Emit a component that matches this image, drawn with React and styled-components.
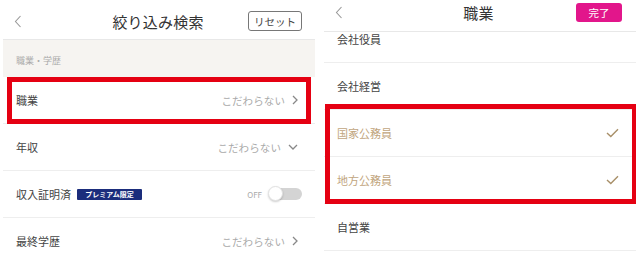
import React from 'react';
import styled, { createGlobalStyle } from 'styled-components';

const GlobalStyle = createGlobalStyle`
  html, body {
    margin: 0;
    padding: 0;
    background: #fff;
  }
  body {
    font-family: "Noto Sans CJK JP", "Noto Sans", sans-serif;
    color: #444;
  }
`;

const Page = styled.div`
  display: flex;
  gap: 9px;
  padding-left: 3px;
  width: 640px;
  height: 264px;
  overflow: hidden;
  box-sizing: border-box;
`;

const Panel = styled.div`
  position: relative;
  flex: none;
  width: 312px;
  height: 264px;
  overflow: hidden;
  background: #fff;
  display: flex;
  flex-direction: column;
`;

const Header = styled.div`
  flex: none;
  box-sizing: border-box;
  height: ${p => p.$height}px;
  padding: ${p => p.$pad};
  border-bottom: 1px solid #e8e8e8;
  display: grid;
  grid-template-columns: 1fr auto 1fr;
  align-items: center;
`;

const Back = styled.div`
  justify-self: start;
  display: flex;
  align-items: center;
`;

const Title = styled.div`
  font-size: 15px;
  color: #333;
  letter-spacing: 0.2px;
`;

const HeaderButton = styled.div`
  justify-self: end;
  box-sizing: border-box;
  display: flex;
  align-items: center;
  justify-content: center;
  width: ${p => p.$w}px;
  height: ${p => p.$h}px;
  border-radius: 3px;
  font-size: 10.5px;
  ${p => p.$primary
    ? 'background: #e2168b; color: #fff;'
    : 'border: 1.5px solid #777; color: #444; background: #fff;'}
`;

const SectionLabel = styled.div`
  flex: none;
  height: 37px;
  box-sizing: border-box;
  padding: 3px 0 0 13px;
  background: #f6f4f1;
  display: flex;
  align-items: center;
  font-size: 9px;
  color: #aaa;
`;

const List = styled.div`
  display: flex;
  flex-direction: column;
  margin-top: ${p => p.$offset || 0}px;
`;

const Row = styled.div`
  flex: none;
  box-sizing: border-box;
  height: 47px;
  padding: 0 17px 0 13px;
  border-bottom: 1px solid #eeeeee;
  display: flex;
  align-items: center;
  justify-content: space-between;
  font-size: 11px;
  color: ${p => p.$selected ? '#c1a57d' : '#444'};
`;

const Label = styled.div`
  display: flex;
  align-items: center;
  gap: 6px;
`;

const Value = styled.div`
  display: flex;
  align-items: center;
  gap: 7px;
  color: #aaa;
  font-size: 10.5px;
  letter-spacing: 0.1px;
`;

const Badge = styled.span`
  display: inline-flex;
  align-items: center;
  justify-content: center;
  width: 65px;
  height: 11px;
  background: #1b2d7c;
  color: #fff;
  font-size: 7px;
  font-weight: 700;
  border-radius: 1px;
`;

const ToggleWrap = styled.div`
  display: flex;
  align-items: center;
  gap: 7px;
  font-size: 8px;
  color: #aaa;
  margin-right: -4px;
`;

const Track = styled.div`
  position: relative;
  width: 31px;
  height: 12px;
  margin-left: 2px;
  border-radius: 6px;
  background: #d4d4d4;
`;

const Knob = styled.div`
  position: absolute;
  left: -3px;
  top: -2px;
  width: 15px;
  height: 15px;
  box-sizing: border-box;
  border-radius: 50%;
  background: #fff;
  border: 1px solid #e2e2e2;
  box-shadow: 0 1px 2px rgba(0, 0, 0, 0.2);
`;

const Highlight = styled.div`
  position: absolute;
  box-sizing: border-box;
  left: ${p => p.$left}px;
  top: ${p => p.$top}px;
  width: ${p => p.$w}px;
  height: ${p => p.$h}px;
  border: 5px solid #e50012;
  pointer-events: none;
`;

const ChevronLeft = () => (
  <svg width="8" height="13" viewBox="0 0 8 13">
    <path d="M6.5 1 L1.5 6.5 L6.5 12" fill="none" stroke="#999" strokeWidth="1.1" />
  </svg>
);

const ChevronRight = () => (
  <svg width="6" height="10" viewBox="0 0 6 10">
    <path d="M1 1 L5 5 L1 9" fill="none" stroke="#888" strokeWidth="1.3" />
  </svg>
);

const ChevronDown = () => (
  <svg width="10" height="6" viewBox="0 0 10 6">
    <path d="M1 1 L5 5 L9 1" fill="none" stroke="#888" strokeWidth="1.3" />
  </svg>
);

const Check = () => (
  <svg width="13" height="10" viewBox="0 0 13 10">
    <path d="M1 5 L4.8 8.5 L12 1.2" fill="none" stroke="#a88f68" strokeWidth="1.4" />
  </svg>
);

const jobs = [
  { name: '会社役員' },
  { name: '会社経営' },
  { name: '国家公務員', selected: true },
  { name: '地方公務員', selected: true },
  { name: '自営業' },
];

export default function App() {
  return (
    <>
      <GlobalStyle />
      <Page>
        <Panel>
          <Header $height={40} $pad="3px 13px 0 11px">
            <Back><ChevronLeft /></Back>
            <Title>絞り込み検索</Title>
            <HeaderButton $w={54} $h={20}>リセット</HeaderButton>
          </Header>
          <SectionLabel>職業・学歴</SectionLabel>
          <List>
            <Row>
              <Label>職業</Label>
              <Value>こだわらない<ChevronRight /></Value>
            </Row>
            <Row>
              <Label>年収</Label>
              <Value>こだわらない<ChevronDown /></Value>
            </Row>
            <Row>
              <Label>収入証明済<Badge>プレミアム限定</Badge></Label>
              <ToggleWrap>
                OFF
                <Track><Knob /></Track>
              </ToggleWrap>
            </Row>
            <Row>
              <Label>最終学歴</Label>
              <Value>こだわらない<ChevronRight /></Value>
            </Row>
          </List>
          <Highlight $left={4} $top={77} $w={304} $h={47} />
        </Panel>

        <Panel>
          <Header $height={32} $pad="0 14px 6px 11px">
            <Back><ChevronLeft /></Back>
            <Title>職業</Title>
            <HeaderButton $primary $w={46} $h={19}>完了</HeaderButton>
          </Header>
          <List $offset={-16}>
            {jobs.map(job => (
              <Row key={job.name} $selected={job.selected}>
                <Label>{job.name}</Label>
                {job.selected && <Check />}
              </Row>
            ))}
          </List>
          <Highlight $left={1} $top={104} $w={312} $h={100} />
        </Panel>
      </Page>
    </>
  );
}
